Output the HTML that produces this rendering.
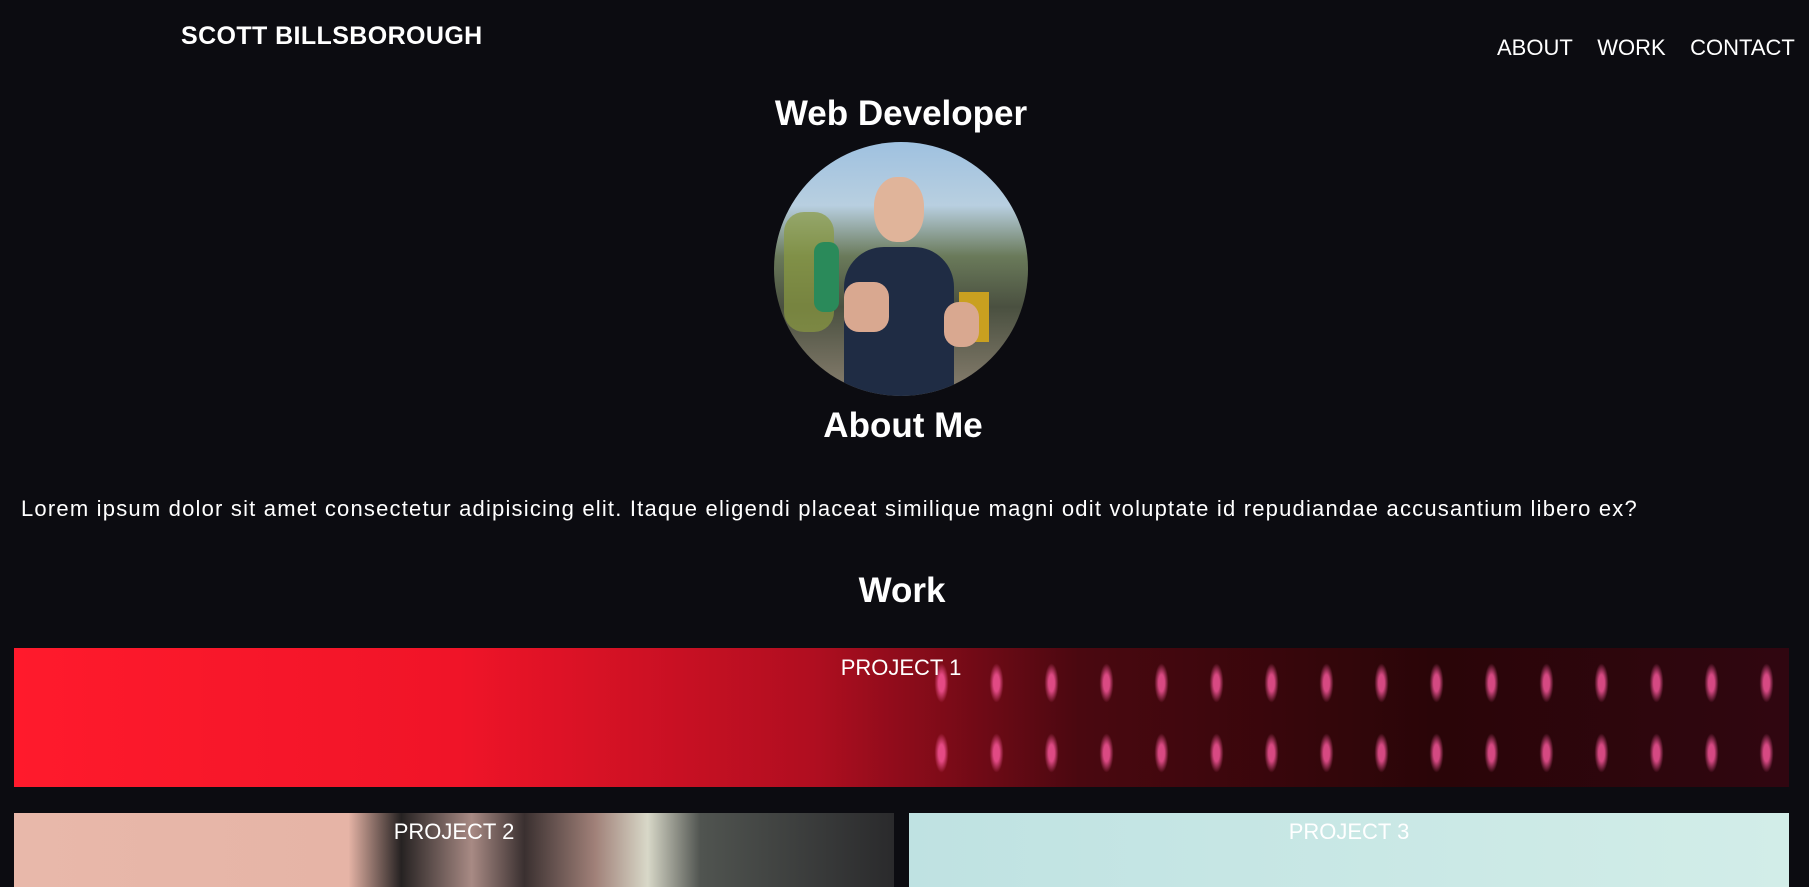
<!DOCTYPE html>
<html><head><style>
*{margin:0;padding:0;box-sizing:border-box}
body{width:1809px;height:887px;overflow:hidden;background:#0c0c11;color:#fff;font-family:"Liberation Sans",sans-serif;position:relative}
.a{position:absolute;white-space:nowrap}
.c{transform:translateX(-50%)}
</style></head><body>
<div class="a" style="left:181px;top:22px;font-size:25px;font-weight:bold;letter-spacing:0.4px">SCOTT BILLSBOROUGH</div>
<div class="a" style="left:1497px;top:35px;font-size:22px">ABOUT&nbsp;&nbsp;&nbsp;&nbsp;WORK&nbsp;&nbsp;&nbsp;&nbsp;CONTACT</div>
<div class="a c" style="left:901px;top:94px;font-size:35px;font-weight:bold">Web Developer</div>
<div class="a" style="left:774px;top:142px;width:254px;height:254px;border-radius:50%;overflow:hidden;background:linear-gradient(180deg,#9fc1e0 0%,#b8cfe0 25%,#6a7a5a 45%,#4a5040 65%,#8a8070 100%)">
 <div style="position:absolute;left:70px;top:105px;width:110px;height:160px;background:#1f2c44;border-radius:40px 40px 0 0"></div>
 <div style="position:absolute;left:100px;top:35px;width:50px;height:65px;background:#e0b49a;border-radius:45%"></div>
 <div style="position:absolute;left:10px;top:70px;width:50px;height:120px;background:#8a9a40;border-radius:20px;opacity:.7"></div>
 <div style="position:absolute;left:40px;top:100px;width:25px;height:70px;background:#2a8a5a;border-radius:10px"></div>
 <div style="position:absolute;left:185px;top:150px;width:30px;height:50px;background:#c9a020"></div>
 <div style="position:absolute;left:70px;top:140px;width:45px;height:50px;background:#d9a890;border-radius:15px"></div>
 <div style="position:absolute;left:170px;top:160px;width:35px;height:45px;background:#d9a890;border-radius:15px"></div>
</div>
<div class="a c" style="left:903px;top:406px;font-size:35px;font-weight:bold">About Me</div>
<div class="a" style="left:21px;top:496px;font-size:22px;letter-spacing:1.2px">Lorem ipsum dolor sit amet consectetur adipisicing elit. Itaque eligendi placeat similique magni odit voluptate id repudiandae accusantium libero ex?</div>
<div class="a c" style="left:902px;top:571px;font-size:35px;font-weight:bold">Work</div>
<div class="a" style="left:14px;top:648px;width:1775px;height:139px;background:linear-gradient(90deg,#ff1a2c 0%,#f01428 25%,#b00e20 45%,#4a0810 60%,#2a0508 80%,#300610 100%)">
 <div style="position:absolute;top:0;bottom:0;right:0;left:900px;background:radial-gradient(ellipse 10px 28px,#ff5aa0 30%,transparent 70%) 0 0/55px 70px;opacity:.8"></div>
</div>
<div class="a c" style="left:901px;top:655px;font-size:22px">PROJECT 1</div>
<div class="a" style="left:14px;top:813px;width:880px;height:74px;background:linear-gradient(90deg,#e8b8aa 0%,#e6b4a6 38%,#262222 44%,#a88a84 52%,#3a3030 58%,#a08078 66%,#d8d8c8 72%,#505450 78%,#2a2a2c 100%)"></div>
<div class="a" style="left:909px;top:813px;width:880px;height:74px;background:linear-gradient(90deg,#bfe2e2,#d2ede8)"></div>
<div class="a c" style="left:454px;top:819px;font-size:22px">PROJECT 2</div>
<div class="a c" style="left:1349px;top:819px;font-size:22px">PROJECT 3</div>
</body></html>
